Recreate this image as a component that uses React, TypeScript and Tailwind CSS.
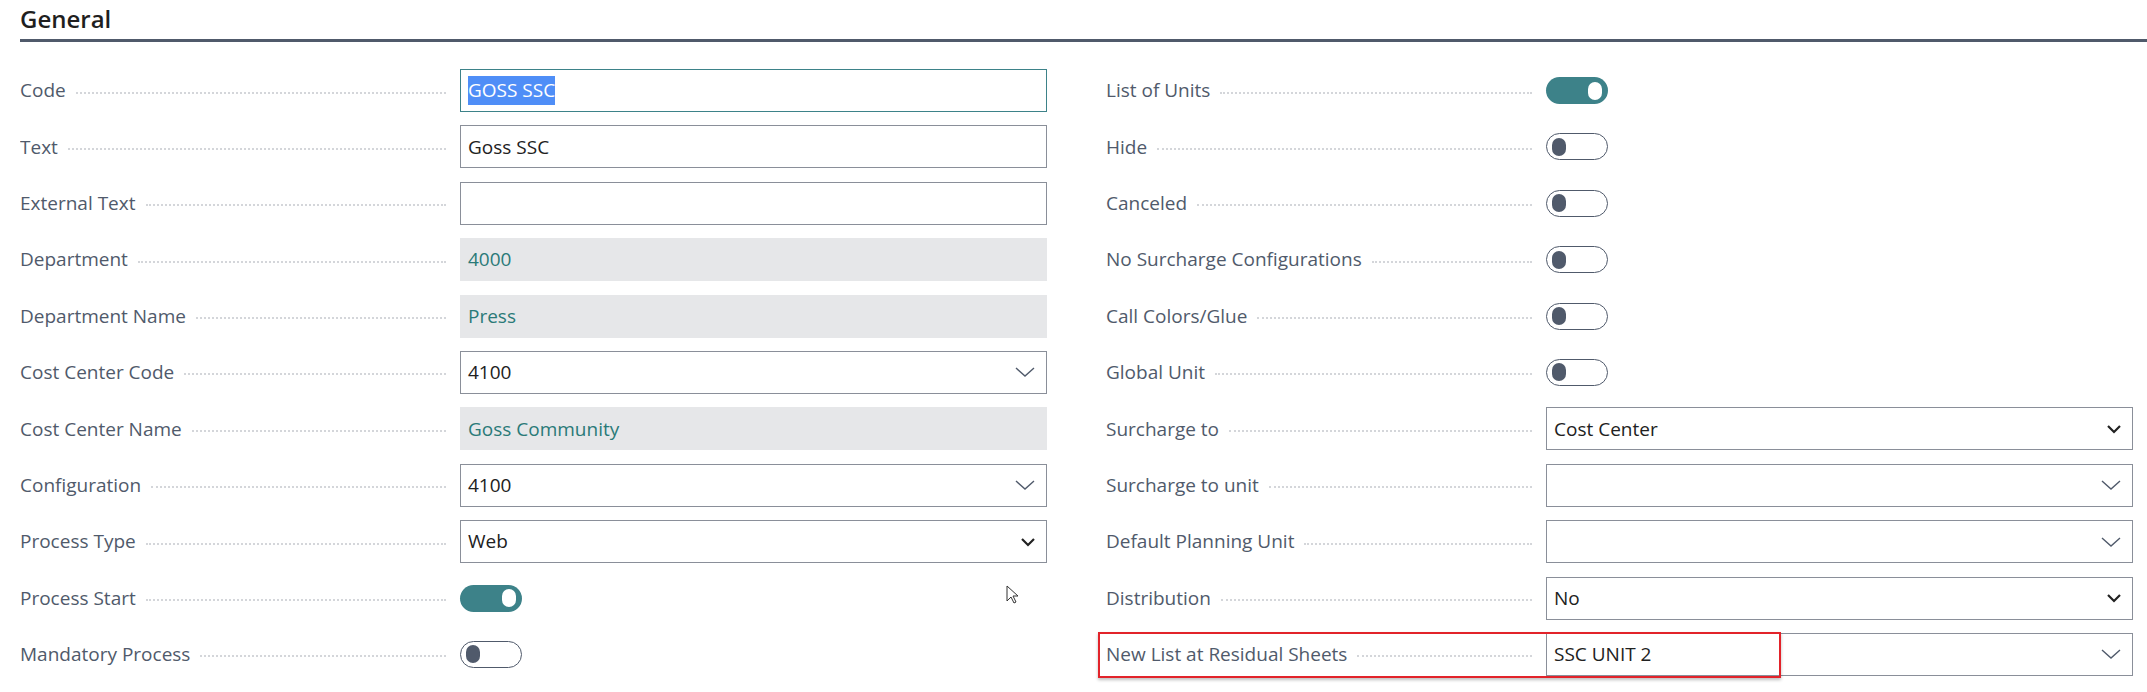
import React from "react";

const Thin = () => (
  <svg width="22" height="14" viewBox="0 0 22 14" className="text-[#505a6b]"><path d="M2 3l9 8 9-8" fill="none" stroke="currentColor" strokeWidth="1.4" /></svg>
);
const Bold = () => (
  <svg width="16" height="12" viewBox="0 0 16 12" className="text-[#222]"><path d="M2 3l6 6 6-6" fill="none" stroke="currentColor" strokeWidth="2.2" /></svg>
);

function Toggle({ on }: { on?: boolean }) {
  return on ? (
    <div className="w-[62px] h-[27px] rounded-full bg-[#3d8289] flex items-center justify-end pr-[6px]">
      <div className="w-[14px] h-[18px] rounded-full bg-white" />
    </div>
  ) : (
    <div className="w-[62px] h-[27px] rounded-full border-[1.5px] border-[#505a6b] bg-white flex items-center pl-[5px]">
      <div className="w-[14px] h-[18px] rounded-full bg-[#505a6b]" />
    </div>
  );
}

type F = { label: string; kind: string; value?: string; chev?: string; on?: boolean };

function Field({ f }: { f: F }) {
  if (f.kind === "toggle") return <div className="h-[43px] flex items-center"><Toggle on={f.on} /></div>;
  if (f.kind === "ro")
    return <div className="h-[43px] bg-[#e6e7e9] flex items-center px-[8px] text-[#2a7a78]">{f.value}</div>;
  return (
    <div className={`h-[43px] border ${f.kind === "focus" ? "border-[#3d8289]" : "border-[#8a8f99]"} bg-white flex items-center pl-[7px] pr-[10px] justify-between text-[#212121]`}>
      {f.kind === "focus" ? <span className="bg-[#4f8ef7] text-white">{f.value}</span> : <span>{f.value}</span>}
      {f.chev === "thin" && <Thin />}
      {f.chev === "bold" && <Bold />}
    </div>
  );
}

function Row({ f, red }: { f: F; red?: boolean }) {
  return (
    <div className="flex items-center relative">
      <div className="w-[440px] flex items-center pr-[14px] text-[#505a6b] overflow-hidden">
        <span className="whitespace-nowrap">{f.label}</span>
        <span className="flex-1 ml-[10px] border-b-2 border-dotted border-[#d4d6da] h-0 translate-y-[2px]" />
      </div>
      <div className="flex-1"><Field f={f} /></div>
      {red && <div className="absolute left-[-8px] top-[-1px] w-[683px] h-[46px] border-2 border-[#e2232a] shadow-[0_2px_3px_rgba(0,0,0,0.25)] pointer-events-none" />}
    </div>
  );
}

const left: F[] = [
  { label: "Code", kind: "focus", value: "GOSS SSC" },
  { label: "Text", kind: "input", value: "Goss SSC" },
  { label: "External Text", kind: "input", value: "" },
  { label: "Department", kind: "ro", value: "4000" },
  { label: "Department Name", kind: "ro", value: "Press" },
  { label: "Cost Center Code", kind: "input", value: "4100", chev: "thin" },
  { label: "Cost Center Name", kind: "ro", value: "Goss Community" },
  { label: "Configuration", kind: "input", value: "4100", chev: "thin" },
  { label: "Process Type", kind: "input", value: "Web", chev: "bold" },
  { label: "Process Start", kind: "toggle", on: true },
  { label: "Mandatory Process", kind: "toggle" },
];
const right: F[] = [
  { label: "List of Units", kind: "toggle", on: true },
  { label: "Hide", kind: "toggle" },
  { label: "Canceled", kind: "toggle" },
  { label: "No Surcharge Configurations", kind: "toggle" },
  { label: "Call Colors/Glue", kind: "toggle" },
  { label: "Global Unit", kind: "toggle" },
  { label: "Surcharge to", kind: "input", value: "Cost Center", chev: "bold" },
  { label: "Surcharge to unit", kind: "input", value: "", chev: "thin" },
  { label: "Default Planning Unit", kind: "input", value: "", chev: "thin" },
  { label: "Distribution", kind: "input", value: "No", chev: "bold" },
  { label: "New List at Residual Sheets", kind: "input", value: "SSC UNIT 2", chev: "thin" },
];

export default function App() {
  return (
    <div className="w-[2147px] h-[692px] bg-white overflow-hidden text-[19px]" style={{ fontFamily: '"Open Sans", "Noto Sans", sans-serif' }}>
      <div className="pl-[20px] pt-[2px] text-[24px] font-semibold text-[#1f1f1f] leading-[34px]">General</div>
      <div className="ml-[20px] mt-[3px] h-[3px] bg-[#505a6b]" />
      <div className="grid grid-cols-[1027px_1027px] gap-x-[59px] pl-[20px] pt-[27px]">
        <div className="flex flex-col gap-y-[13.4px]">{left.map((f) => <Row key={f.label} f={f} />)}</div>
        <div className="flex flex-col gap-y-[13.4px] relative">
          {right.map((f, i) => <Row key={f.label} f={f} red={i === 10} />)}
          <svg className="absolute left-[-100px] top-[516px]" width="14" height="20" viewBox="0 0 14 20"><path d="M1 1v15l4-4 3 6 2-1-3-6h5z" fill="white" stroke="#333" strokeWidth="1" /></svg>
        </div>
      </div>
    </div>
  );
}
